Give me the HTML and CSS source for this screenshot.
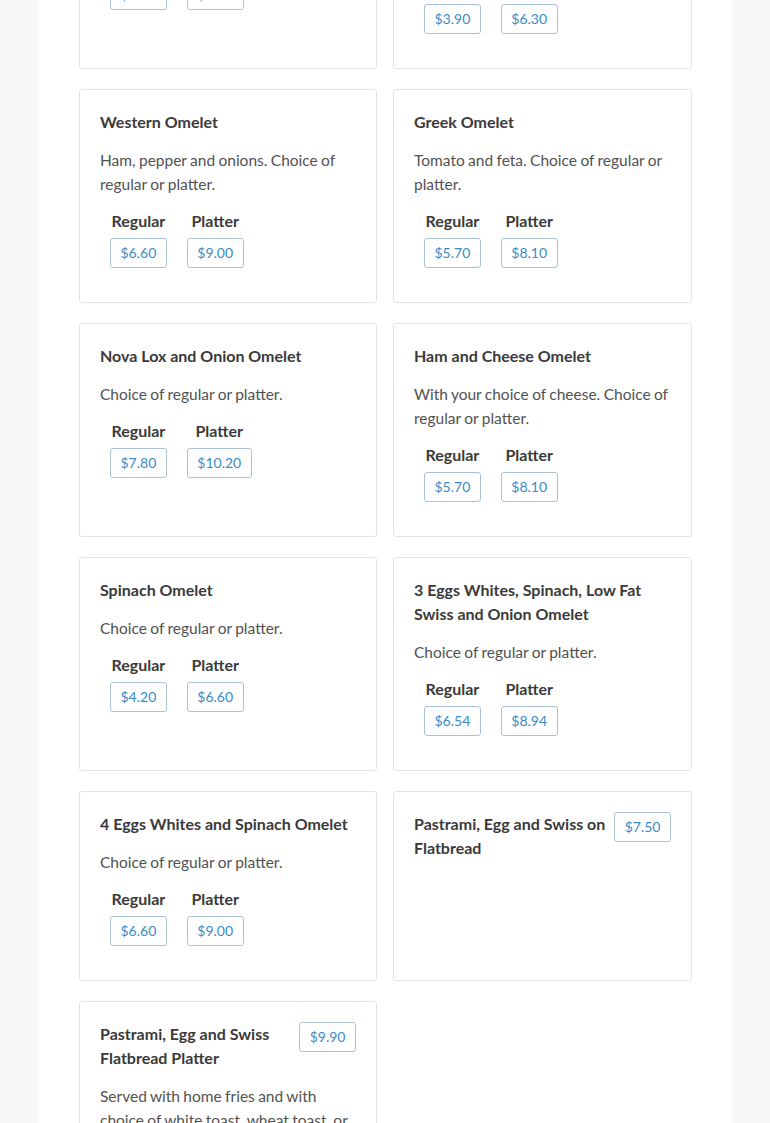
FILE: index.html
```html
<!DOCTYPE html>
<html lang="en">
<head>
<meta charset="utf-8">
<title>Omelets</title>
<link rel="stylesheet" href="styles.css">
</head>
<body>
<main class="page">
  <section class="menu-grid">
    <article class="item">
      <h3 class="item-title">Cheese Omelet</h3>
      <p class="item-desc">Choice of regular or platter.</p>
      <div class="prices">
        <div class="price-col"><span class="price-label">Regular</span><span class="price">$3.90</span></div>
        <div class="price-col"><span class="price-label">Platter</span><span class="price">$6.30</span></div>
      </div>
    </article>
    <article class="item">
      <h3 class="item-title">Plain Omelet</h3>
      <p class="item-desc">Made with two eggs. Choice of regular or platter.</p>
      <div class="prices">
        <div class="price-col"><span class="price-label">Regular</span><span class="price">$3.90</span></div>
        <div class="price-col"><span class="price-label">Platter</span><span class="price">$6.30</span></div>
      </div>
    </article>

    <article class="item">
      <h3 class="item-title">Western Omelet</h3>
      <p class="item-desc">Ham, pepper and onions. Choice of regular or platter.</p>
      <div class="prices">
        <div class="price-col"><span class="price-label">Regular</span><span class="price">$6.60</span></div>
        <div class="price-col"><span class="price-label">Platter</span><span class="price">$9.00</span></div>
      </div>
    </article>
    <article class="item">
      <h3 class="item-title">Greek Omelet</h3>
      <p class="item-desc">Tomato and feta. Choice of regular or platter.</p>
      <div class="prices">
        <div class="price-col"><span class="price-label">Regular</span><span class="price">$5.70</span></div>
        <div class="price-col"><span class="price-label">Platter</span><span class="price">$8.10</span></div>
      </div>
    </article>

    <article class="item">
      <h3 class="item-title">Nova Lox and Onion Omelet</h3>
      <p class="item-desc">Choice of regular or platter.</p>
      <div class="prices">
        <div class="price-col"><span class="price-label">Regular</span><span class="price">$7.80</span></div>
        <div class="price-col"><span class="price-label">Platter</span><span class="price">$10.20</span></div>
      </div>
    </article>
    <article class="item">
      <h3 class="item-title">Ham and Cheese Omelet</h3>
      <p class="item-desc">With your choice of cheese. Choice of regular or platter.</p>
      <div class="prices">
        <div class="price-col"><span class="price-label">Regular</span><span class="price">$5.70</span></div>
        <div class="price-col"><span class="price-label">Platter</span><span class="price">$8.10</span></div>
      </div>
    </article>

    <article class="item">
      <h3 class="item-title">Spinach Omelet</h3>
      <p class="item-desc">Choice of regular or platter.</p>
      <div class="prices">
        <div class="price-col"><span class="price-label">Regular</span><span class="price">$4.20</span></div>
        <div class="price-col"><span class="price-label">Platter</span><span class="price">$6.60</span></div>
      </div>
    </article>
    <article class="item">
      <h3 class="item-title">3 Eggs Whites, Spinach, Low Fat Swiss and Onion Omelet</h3>
      <p class="item-desc">Choice of regular or platter.</p>
      <div class="prices">
        <div class="price-col"><span class="price-label">Regular</span><span class="price">$6.54</span></div>
        <div class="price-col"><span class="price-label">Platter</span><span class="price">$8.94</span></div>
      </div>
    </article>

    <article class="item">
      <h3 class="item-title">4 Eggs Whites and Spinach Omelet</h3>
      <p class="item-desc">Choice of regular or platter.</p>
      <div class="prices">
        <div class="price-col"><span class="price-label">Regular</span><span class="price">$6.60</span></div>
        <div class="price-col"><span class="price-label">Platter</span><span class="price">$9.00</span></div>
      </div>
    </article>
    <article class="item">
      <div class="item-head">
        <h3 class="item-title">Pastrami, Egg and Swiss on Flatbread</h3>
        <span class="price">$7.50</span>
      </div>
    </article>

    <article class="item">
      <div class="item-head">
        <h3 class="item-title">Pastrami, Egg and Swiss Flatbread Platter</h3>
        <span class="price">$9.90</span>
      </div>
      <p class="item-desc">Served with home fries and with choice of white toast, wheat toast, or rye toast.</p>
    </article>
  </section>
</main>
</body>
</html>
```

FILE: styles.css
```css
html, body {
  margin: 0;
  padding: 0;
}
body {
  background: #f7f7f7;
  font-family: Lato, "Open Sans", Arial, sans-serif;
  color: #3b3b3b;
}
.page {
  width: 693px;
  margin: -145px 0 0 39px;
  background: #fff;
  padding: 0 40px 40px;
  box-sizing: border-box;
  min-height: 1400px;
}
.menu-grid {
  display: grid;
  grid-template-columns: 298px 299px;
  column-gap: 16px;
  row-gap: 20px;
}
.item {
  border: 1px solid #e3e3e3;
  border-radius: 3px;
  padding: 20px 20px 34px;
  background: #fff;
}
.item-title {
  margin: 0 0 14px;
  font-size: 16px;
  line-height: 24px;
  font-weight: 700;
  color: #3a3a3a;
}
.item-desc {
  margin: 0 0 13px;
  font-size: 15.5px;
  line-height: 24px;
  word-spacing: -0.6px;
  color: #525252;
}
.item-head {
  display: flex;
  justify-content: space-between;
  align-items: flex-start;
  gap: 4px;
  margin-bottom: 14px;
}
.item-head .item-title {
  margin: 0;
}
.prices {
  display: flex;
}
.price-col {
  display: flex;
  flex-direction: column;
  align-items: center;
  padding: 0 10px;
}
.price-label {
  font-size: 16px;
  line-height: 24px;
  font-weight: 700;
  color: #3a3a3a;
  margin-bottom: 5px;
}
.price {
  display: block;
  flex: none;
  border: 1px solid #a9c3d3;
  border-radius: 3px;
  padding: 0 9.5px;
  font-size: 14px;
  line-height: 28px;
  color: #3a8bc6;
  white-space: nowrap;
}
```
